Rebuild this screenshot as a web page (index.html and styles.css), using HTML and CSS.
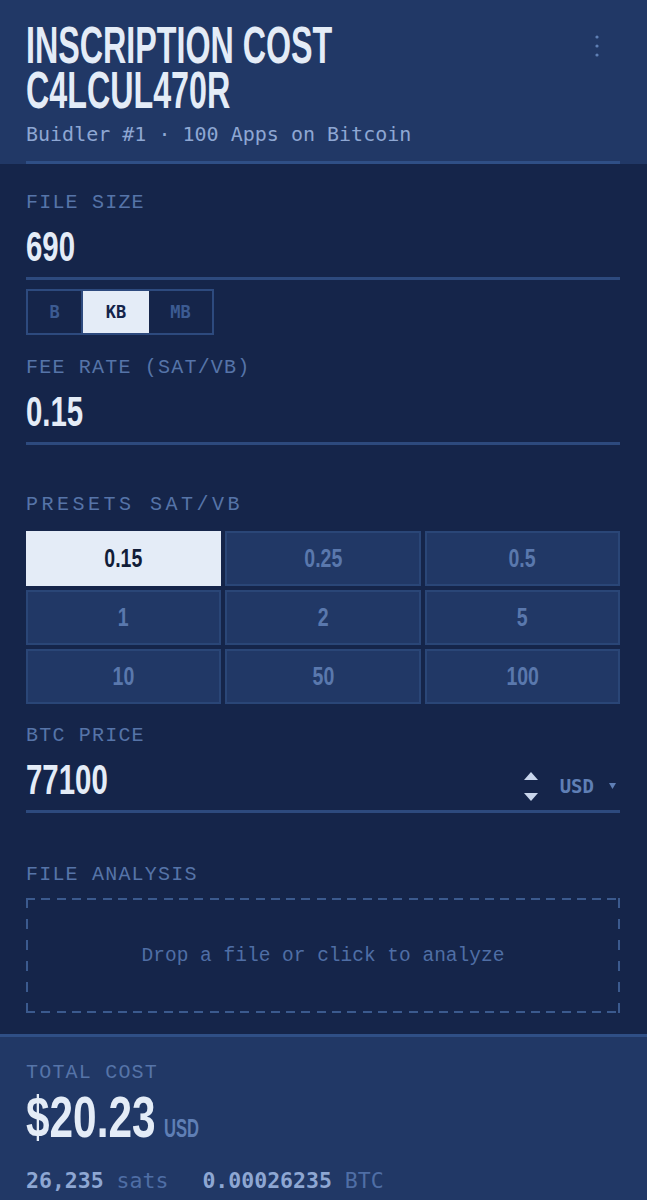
FILE: index.html
```html
<!DOCTYPE html>
<html lang="en">
<head>
<meta charset="utf-8">
<title>Inscription Cost Calculator</title>
<link rel="stylesheet" href="styles.css">
</head>
<body>
<div class="app">
  <header class="hdr">
    <div class="hdr-in">
      <div class="hdr-row">
        <h1 class="title"><span class="tl">INSCRIPTION COST</span><span class="tl">C4LCUL470R</span></h1>
        <button class="menu" aria-label="Menu">
          <svg width="6" height="24" viewBox="0 0 6 24"><circle cx="3" cy="3" r="1.6"/><circle cx="3" cy="12" r="1.6"/><circle cx="3" cy="21" r="1.6"/></svg>
        </button>
      </div>
      <p class="sub">Buidler #1 · 100 Apps on Bitcoin</p>
    </div>
  </header>

  <main class="main">
    <div class="field">
      <div class="label">FILE SIZE</div>
      <div class="input"><span class="val">690</span></div>
    </div>

    <div class="seg">
      <button class="seg-b seg-1">B</button><button class="seg-b seg-2 on">KB</button><button class="seg-b seg-3">MB</button>
    </div>

    <div class="field fee">
      <div class="label">FEE RATE (SAT/VB)</div>
      <div class="input"><span class="val">0.15</span></div>
    </div>

    <div class="label presets-label">PRESETS SAT/VB</div>
    <div class="grid">
      <button class="cell on"><span>0.15</span></button>
      <button class="cell"><span>0.25</span></button>
      <button class="cell"><span>0.5</span></button>
      <button class="cell"><span>1</span></button>
      <button class="cell"><span>2</span></button>
      <button class="cell"><span>5</span></button>
      <button class="cell"><span>10</span></button>
      <button class="cell"><span>50</span></button>
      <button class="cell"><span>100</span></button>
    </div>

    <div class="field btc">
      <div class="label">BTC PRICE</div>
      <div class="input">
        <span class="val">77100</span>
        <div class="price-tools">
          <svg class="spin" width="14" height="29" viewBox="0 0 14 29"><polygon points="7,0 14,8 0,8"/><polygon points="0,21 14,21 7,29"/></svg>
          <span class="cur">USD</span>
          <svg class="caret" width="7" height="6" viewBox="0 0 7 6"><polygon points="0,0 7,0 3.5,6"/></svg>
        </div>
      </div>
    </div>

    <div class="label fa-label">FILE ANALYSIS</div>
    <div class="drop">Drop a file or click to analyze</div>
  </main>

  <footer class="total">
    <div class="label">TOTAL COST</div>
    <div class="amount"><span class="big">$20.23</span><span class="unit">USD</span></div>
    <div class="conv">
      <span><b>26,235</b> sats</span>
      <span><b>0.00026235</b> BTC</span>
    </div>
  </footer>
</div>
</body>
</html>
```

FILE: styles.css
```css
:root {
  --hdr: #213866;
  --bg: #15254a;
  --line: #2d4a7e;
  --label: #5674a8;
  --text: #e4ecf7;
  --dim: #4f6ea5;
  --cond: "Liberation Sans Narrow", "Liberation Sans", sans-serif;
  --mono: "Liberation Mono", monospace;
  --mono2: "DejaVu Sans Mono", monospace;
}

* { box-sizing: border-box; }

html, body {
  margin: 0;
  padding: 0;
  background: var(--hdr);
}

.app {
  width: 647px;
  min-height: 1200px;
  display: flex;
  flex-direction: column;
  background: var(--bg);
}

/* header */
.hdr {
  background: var(--hdr);
  padding: 23px 27px 0 26px;
}
.hdr-in {
  border-bottom: 3px solid #2f4f86;
  padding-bottom: 15px;
}
.hdr-row {
  display: flex;
  justify-content: space-between;
  align-items: flex-start;
}
.title {
  margin: 0;
  display: flex;
  flex-direction: column;
  font-family: var(--cond);
  font-weight: 700;
  font-size: 52px;
  color: var(--text);
  transform: scaleX(0.62);
  transform-origin: left top;
  white-space: nowrap;
}
.tl {
  display: block;
  line-height: 45px;
}
.menu {
  background: none;
  border: 0;
  padding: 0;
  margin: 11px 20px 0 0;
  fill: #5f7fb5;
  display: flex;
}
.sub {
  margin: 9px 0 0;
  font-family: var(--mono2);
  font-size: 20px;
  line-height: 24px;
  color: #8ea7d3;
}

/* main */
.main {
  padding: 29px 27px 21px 26px;
  display: flex;
  flex-direction: column;
}
.label {
  font-family: var(--mono);
  font-size: 20px;
  line-height: 20px;
  letter-spacing: 1.2px;
  color: var(--label);
}
.input {
  margin-top: 13px;
  display: flex;
  align-items: center;
  justify-content: space-between;
  border-bottom: 3px solid var(--line);
  padding-bottom: 9px;
}
.val {
  display: inline-block;
  font-family: var(--cond);
  font-weight: 700;
  font-size: 42px;
  line-height: 42px;
  color: var(--text);
  transform: scaleX(0.7);
  transform-origin: left center;
}

.seg {
  margin-top: 9px;
  align-self: flex-start;
  display: flex;
  border: 2px solid var(--line);
  height: 46px;
}
.seg-b {
  border: 0;
  background: transparent;
  font-family: var(--mono2);
  font-weight: 700;
  font-size: 17px;
  color: #3c5b92;
  padding: 0;
}
.seg-1 { width: 55px; border-right: 2px solid var(--line); }
.seg-2 { width: 66px; }
.seg-3 { width: 63px; }
.seg-b.on { background: var(--text); color: #14244a; }

.fee { margin-top: 23px; }

.presets-label {
  margin-top: 50px;
  letter-spacing: 3.5px;
}
.grid {
  margin-top: 16px;
  display: grid;
  grid-template-columns: repeat(3, 1fr);
  grid-auto-rows: 55px;
  gap: 4px;
}
.cell {
  background: var(--hdr);
  border: 2px solid #2a4677;
  color: #5a78ad;
  font-family: var(--cond);
  font-weight: 700;
  font-size: 26px;
  padding: 0;
  display: flex;
  align-items: center;
  justify-content: center;
}
.cell span {
  display: inline-block;
  transform: scaleX(0.75);
}
.cell.on {
  background: var(--text);
  border-color: var(--text);
  color: #111d38;
}

.btc { margin-top: 22px; }
.price-tools {
  display: flex;
  align-items: center;
  margin-top: 12px;
  margin-right: 4px;
}
.spin { fill: #c9d6ec; margin-right: 22px; }
.cur {
  font-family: var(--mono2);
  font-weight: 700;
  font-size: 19px;
  color: #5f7fb5;
}
.caret {
  fill: #5f7fb5;
  margin-left: 15px;
}

.fa-label { margin-top: 52px; }
.drop {
  margin-top: 13px;
  height: 115px;
  display: flex;
  align-items: center;
  justify-content: center;
  font-family: var(--mono);
  font-size: 19.5px;
  color: var(--dim);
  background:
    repeating-linear-gradient(90deg, #3b5a8e 0 9px, transparent 9px 15.3px) left top / 100% 2px no-repeat,
    repeating-linear-gradient(90deg, #3b5a8e 0 9px, transparent 9px 15.3px) left bottom / 100% 2px no-repeat,
    repeating-linear-gradient(180deg, #3b5a8e 0 10px, transparent 10px 21px) left top / 2px 100% no-repeat,
    repeating-linear-gradient(180deg, #3b5a8e 0 10px, transparent 10px 21px) right top / 2px 100% no-repeat;
}

/* footer */
.total {
  flex: 1;
  background: var(--hdr);
  border-top: 3px solid #2f4f86;
  padding: 26px 27px 30px 26px;
}
.amount {
  margin-top: 6px;
  display: flex;
  align-items: baseline;
}
.big {
  display: inline-block;
  font-family: var(--cond);
  font-weight: 700;
  font-size: 58px;
  line-height: 56px;
  color: var(--text);
  transform: scaleX(0.73);
  transform-origin: left center;
  margin-right: -39px;
}
.unit {
  font-family: var(--cond);
  font-weight: 700;
  font-size: 26px;
  color: #5f7fb5;
  display: inline-block;
  transform: scaleX(0.64);
  transform-origin: left center;
}
.conv {
  margin-top: 23px;
  display: flex;
  gap: 34px;
  font-family: var(--mono2);
  font-size: 21.5px;
  line-height: 26px;
  color: var(--dim);
}
.conv b { color: #8ea7d3; }
```
